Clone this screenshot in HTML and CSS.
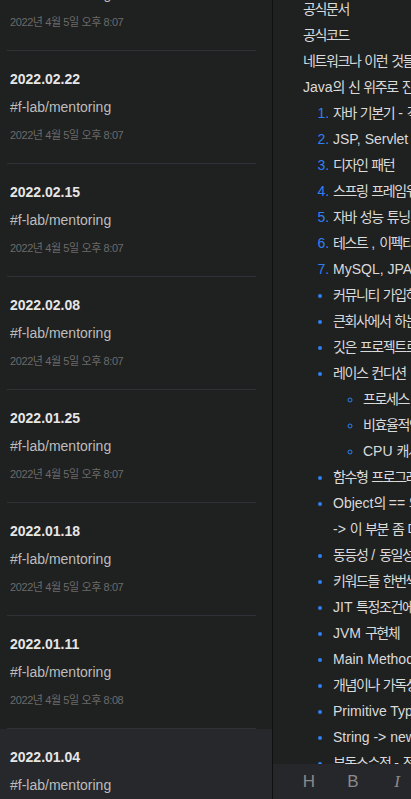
FILE: index.html
```html
<!DOCTYPE html>
<html lang="ko">
<head>
    <meta charset="UTF-8">
    <meta name="viewport" content="width=device-width, initial-scale=1.0">
    <title>Notes</title>
    <link rel="stylesheet" href="styles.css">
</head>
<body>
    <div class="app">
        <div class="sidebar">
            <div class="note note-first">
                <p class="note-title">2022.02.28</p>
                <p class="note-tag">#f-lab/mentoring</p>
                <p class="note-date">2022년 4월 5일 오후 8:07</p>
            </div>
            <div class="sep"></div>
            <div class="note">
                <p class="note-title">2022.02.22</p>
                <p class="note-tag">#f-lab/mentoring</p>
                <p class="note-date">2022년 4월 5일 오후 8:07</p>
            </div>
            <div class="sep"></div>
            <div class="note">
                <p class="note-title">2022.02.15</p>
                <p class="note-tag">#f-lab/mentoring</p>
                <p class="note-date">2022년 4월 5일 오후 8:07</p>
            </div>
            <div class="sep"></div>
            <div class="note">
                <p class="note-title">2022.02.08</p>
                <p class="note-tag">#f-lab/mentoring</p>
                <p class="note-date">2022년 4월 5일 오후 8:07</p>
            </div>
            <div class="sep"></div>
            <div class="note">
                <p class="note-title">2022.01.25</p>
                <p class="note-tag">#f-lab/mentoring</p>
                <p class="note-date">2022년 4월 5일 오후 8:07</p>
            </div>
            <div class="sep"></div>
            <div class="note">
                <p class="note-title">2022.01.18</p>
                <p class="note-tag">#f-lab/mentoring</p>
                <p class="note-date">2022년 4월 5일 오후 8:07</p>
            </div>
            <div class="sep"></div>
            <div class="note">
                <p class="note-title">2022.01.11</p>
                <p class="note-tag">#f-lab/mentoring</p>
                <p class="note-date">2022년 4월 5일 오후 8:08</p>
            </div>
            <div class="sep"></div>
            <div class="note note-active">
                <p class="note-title">2022.01.04</p>
                <p class="note-tag">#f-lab/mentoring</p>
                <p class="note-date">2022년 4월 5일 오후 8:08</p>
            </div>
        </div>

        <div class="editor">
            <div class="doc">
                <p class="doc-first"><span class="ko">공식문서</span></p>
                <p><span class="ko">공식코드</span></p>
                <p><span class="ko">네트워크나</span> <span class="ko">이런</span> <span class="ko">것들은</span> <span class="ko">나중에</span></p>
                <p>Java<span class="ko">의</span> <span class="ko">신</span> <span class="ko">위주로</span> <span class="ko">진행</span></p>
                <ol>
                    <li><span class="ko">자바</span> <span class="ko">기본기</span> - <span class="ko">객체지향</span></li>
                    <li>JSP, Servlet</li>
                    <li><span class="ko">디자인</span> <span class="ko">패턴</span></li>
                    <li><span class="ko">스프링</span> <span class="ko">프레임워크</span></li>
                    <li><span class="ko">자바</span> <span class="ko">성능</span> <span class="ko">튜닝</span></li>
                    <li><span class="ko">테스트</span> , <span class="ko">이펙티브</span> <span class="ko">자바</span></li>
                    <li>MySQL, JPA</li>
                </ol>
                <ul>
                    <li><span class="ko">커뮤니티</span> <span class="ko">가입하기</span></li>
                    <li><span class="ko">큰회사에서</span> <span class="ko">하는</span> <span class="ko">방식</span></li>
                    <li><span class="ko">깃은</span> <span class="ko">프로젝트로</span> <span class="ko">익히기</span></li>
                    <li><span class="ko">레이스</span> <span class="ko">컨디션</span>
                        <ul>
                            <li><span class="ko">프로세스</span> / <span class="ko">스레드</span></li>
                            <li><span class="ko">비효율적인</span> <span class="ko">락</span></li>
                            <li>CPU <span class="ko">캐시</span></li>
                        </ul>
                    </li>
                    <li><span class="ko">함수형</span> <span class="ko">프로그래밍</span></li>
                    <li>Object<span class="ko">의</span> == <span class="ko">와</span> equals</li>
                    <li class="plain">-&gt; <span class="ko">이</span> <span class="ko">부분</span> <span class="ko">좀</span> <span class="ko">더</span></li>
                    <li><span class="ko">동등성</span> / <span class="ko">동일성</span></li>
                    <li><span class="ko">키워드들</span> <span class="ko">한번씩</span> <span class="ko">정리</span></li>
                    <li>JIT <span class="ko">특정조건에서</span> <span class="ko">컴파일</span></li>
                    <li>JVM <span class="ko">구현체</span></li>
                    <li>Main Method</li>
                    <li><span class="ko">개념이나</span> <span class="ko">가독성</span></li>
                    <li>Primitive Type</li>
                    <li>String -&gt; new String</li>
                    <li><span class="ko">부동소수점</span> - <span class="ko">정밀도</span></li>
                </ul>
            </div>
            <div class="toolbar">
                <span class="tool">H</span>
                <span class="tool">B</span>
                <span class="tool tool-italic">I</span>
            </div>
        </div>
    </div>
</body>
</html>
```

FILE: styles.css
```css
body {
    margin: 0;
    background-color: #1f2020;
    font-family: "Liberation Sans", "Noto Sans CJK KR", sans-serif;
}
p {
    margin: 0;
}
.app {
    display: flex;
    height: 100vh;
    overflow: hidden;
}

/* note list */
.sidebar {
    width: 272px;
    flex-shrink: 0;
    border-right: 1px solid #0e0f0f;
    overflow: hidden;
}
.note {
    padding: 19px 10px 20px 10px;
}
.note-first {
    margin-top: -62px;
}
.note-active {
    background-color: #27282b;
    height: 100%;
}
.note-title {
    font-size: 14px;
    font-weight: bold;
    line-height: 18px;
    color: #e6e6e6;
}
.note-tag {
    margin-top: 9px;
    font-size: 14px;
    line-height: 20px;
    color: #bdbdbd;
}
.note-date {
    margin-top: 10px;
    font-size: 11px;
    letter-spacing: -0.4px;
    line-height: 16px;
    color: #6b6b6b;
}
.sep {
    height: 1px;
    margin: 0 16px 0 7px;
    background-color: #303137;
}

/* editor */
.editor {
    flex: 1;
    display: flex;
    flex-direction: column;
    min-width: 0;
}
.doc {
    flex: 1;
    overflow: hidden;
    padding-left: 30px;
    white-space: nowrap;
    font-size: 14px;
    line-height: 26px;
    color: #dadada;
}
.doc .ko {
    letter-spacing: -1.4px;
}
.doc-first {
    margin-top: -4px;
}
.doc ol,
.doc ul {
    margin: 0;
    padding-left: 30px;
}
.doc li::marker {
    color: #2f80f5;
}
.doc ul ul {
    list-style-type: circle;
}
.doc li.plain {
    list-style-type: none;
}
.toolbar {
    height: 35px;
    flex-shrink: 0;
    display: flex;
    align-items: center;
    padding-left: 14px;
    background-color: #26272a;
}
.tool {
    width: 44px;
    flex-shrink: 0;
    text-align: center;
    font-size: 17px;
    color: #8a8a8a;
}
.tool-italic {
    font-family: "Liberation Serif", serif;
    font-style: italic;
}
```
